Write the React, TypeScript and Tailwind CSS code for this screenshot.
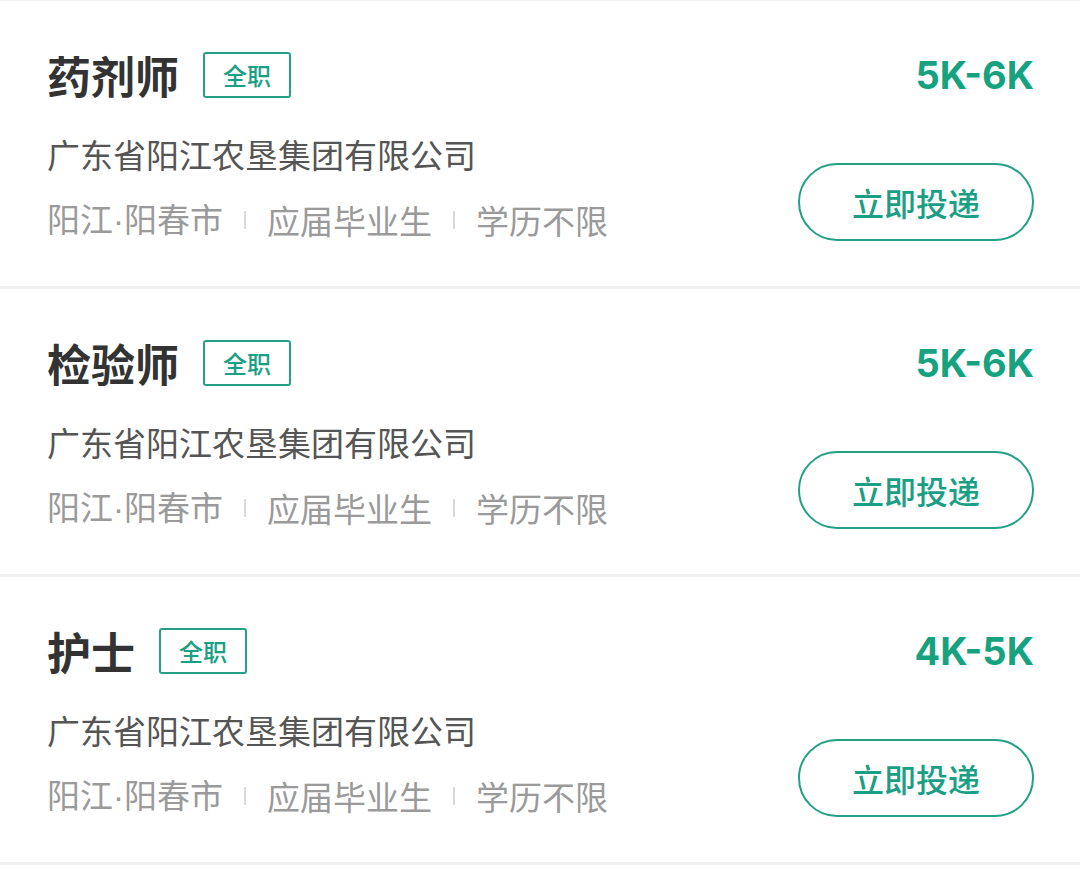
const jobs = [
  { title: "药剂师", salary: "5K-6K" },
  { title: "检验师", salary: "5K-6K" },
  { title: "护士", salary: "4K-5K" },
];

const company = "广东省阳江农垦集团有限公司";

function JobCard({ title, salary }: { title: string; salary: string }) {
  return (
    <div className="h-[288px] border-b-[3px] border-[#f0f0f0] pl-[47px] pr-[46px] pt-[51px] flex justify-between">
      <div className="flex flex-col">
        <div className="flex items-center h-[46px]">
          <h3 className="text-[44px] leading-[46px] font-bold text-[#333333]">{title}</h3>
          <span className="ml-[24px] h-[46px] w-[88px] flex items-center justify-center border-2 border-[#24a086] rounded-[3px] text-[24px] font-medium text-[#1a9f84]">
            全职
          </span>
        </div>
        <p className="mt-[36px] text-[33px] leading-[40px] text-[#555555]">{company}</p>
        <div className="mt-[24px] flex items-center text-[33px] leading-[40px] text-[#9a9a9a]">
          <span>
            阳江<span className="font-['Liberation_Sans',sans-serif]">·</span>阳春市
          </span>
          <span className="mx-[21px] w-[2px] h-[18px] bg-[#d9d9d9]" />
          <span>应届毕业生</span>
          <span className="mx-[21px] w-[2px] h-[18px] bg-[#d9d9d9]" />
          <span>学历不限</span>
        </div>
      </div>
      <div className="flex flex-col items-end">
        <p className="mt-[3px] text-[38px] leading-[40px] font-bold text-[#17a27f] font-['Inter','Noto_Sans',sans-serif]">
          {salary}
        </p>
        <button className="mt-[68px] w-[236px] h-[78px] rounded-full border-2 border-[#24a086] text-[32px] font-medium text-[#1a9f84] flex items-center justify-center">
          立即投递
        </button>
      </div>
    </div>
  );
}

export default function App() {
  return (
    <div className="w-[1080px] min-h-[870px] bg-white border-t border-[#eeeeee] font-['Noto_Sans_CJK_SC','Noto_Sans',sans-serif]">
      {jobs.map((job, index) => (
        <JobCard key={index} title={job.title} salary={job.salary} />
      ))}
    </div>
  );
}
